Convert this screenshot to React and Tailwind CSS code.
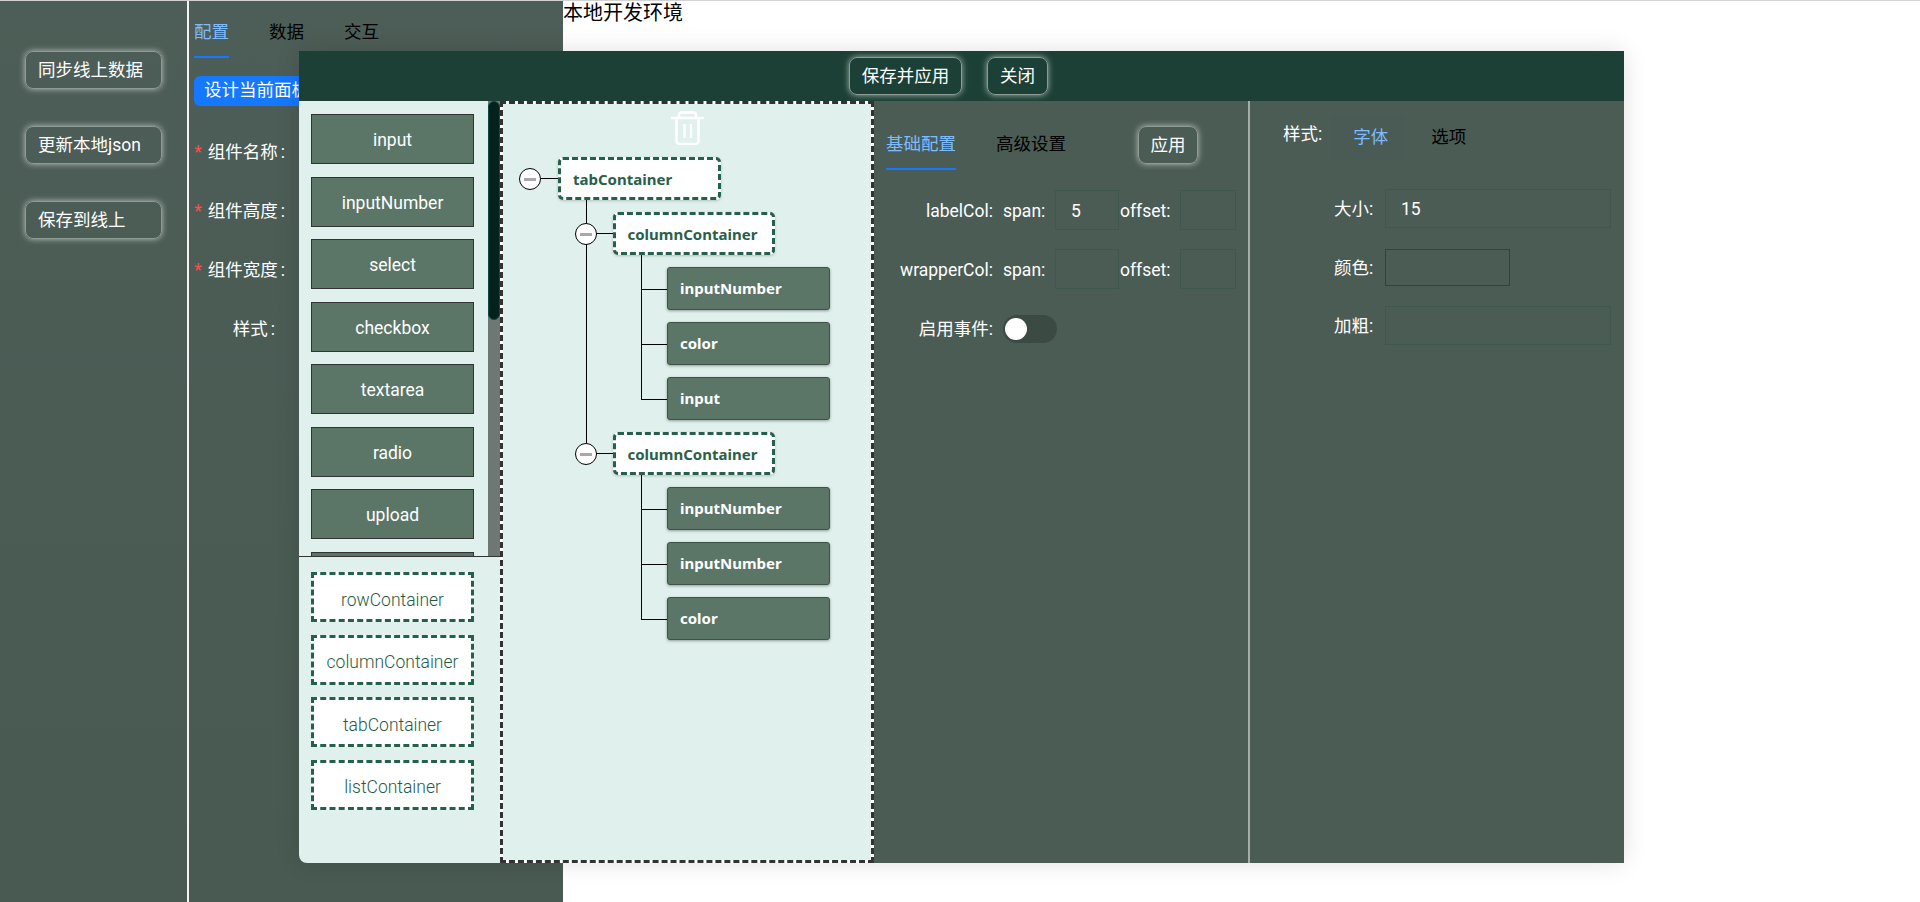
import React from 'react';

const fontStack = { fontFamily: 'Roboto, "Noto Sans CJK SC", sans-serif' };
const treeFont = { fontFamily: '"Noto Sans", "Noto Sans CJK SC", sans-serif' };

const GlowButton = ({ children, className = '' }) => (
  <button className={`h-[38px] rounded-lg border border-[#8d9c95] text-[17.5px] leading-[36px] text-white shadow-[0_0_6px_rgba(255,255,255,0.6)] ${className}`}>
    {children}
  </button>
);

const Tabs = ({ items, className = '' }) => (
  <div className={`flex gap-10 ${className}`}>
    {items.map((t, i) => (
      <div key={t} className={`h-[37px] border-b-[2.5px] text-[17.5px] leading-[22px] ${i === 0 ? 'border-[#1677ff] text-[#7cbcff]' : 'border-transparent text-black'}`}>{t}</div>
    ))}
  </div>
);

const FormLabel = ({ text, required, className = '' }) => (
  <div className={`flex items-center justify-end text-[17.5px] text-white ${className}`}>
    {required && <span className="mr-[6px] text-[#ff4d4f]">*</span>}
    {text}<span className="ml-[3px]">:</span>
  </div>
);

const Field = ({ value, className = '' }) => (
  <div className={`shrink-0 border border-[#3f574c] pl-[15px] text-[17.5px] text-white ${className}`}>{value}</div>
);

const Collapse = ({ className = '' }) => (
  <span className={`absolute flex h-[22px] w-[22px] items-center justify-center rounded-full border-[1.5px] border-black bg-white ${className}`}>
    <span className="h-[3px] w-[12px] bg-[#a8a8a8]"></span>
  </span>
);

const ContainerNode = ({ label, left, top, children }) => (
  <div className={`relative w-[162.5px] ${top}`}>
    <div className="relative flex h-[43px] items-center rounded-[5px] border-[3px] border-dashed border-[#24614a] bg-white pl-[12px] pt-[1px] text-[15px] font-bold text-[#2a6049] shadow-[0_1px_3px_rgba(0,0,0,0.2)]">
      {label}
    </div>
    <Collapse className={left} />
    <span className="absolute left-[-17px] top-[21px] h-px w-[17px] bg-black"></span>
    {children}
  </div>
);

const Leaf = ({ label }) => (
  <div className="relative mt-3 flex h-[43px] w-[163px] items-center rounded-[3px] border border-[#3e5248] bg-[#5b7667] pl-[12px] text-[15px] font-bold text-white shadow-[0_1px_3px_rgba(0,0,0,0.35)]">
    <span className="absolute left-[-27px] top-[21px] h-px w-[26px] bg-black"></span>
    {label}
  </div>
);

const LeafGroup = ({ items }) => (
  <div className="relative ml-[54.5px] flex flex-col">
    <span className="absolute left-[-26px] top-0 h-[144px] w-px bg-black"></span>
    {items.map((t, i) => <Leaf key={i} label={t} />)}
  </div>
);

const App = () => {
  // the last one is cut off by the scroll area, its label never shows
  const widgets = ['input', 'inputNumber', 'select', 'checkbox', 'textarea', 'radio', 'upload', ''];
  const containers = ['rowContainer', 'columnContainer', 'tabContainer', 'listContainer'];

  return (
    <div className="relative h-[902px] w-full overflow-hidden border-t border-[#d2d2d2] bg-white" style={fontStack}>
      <div className="flex h-full">
        <aside className="flex w-[187px] shrink-0 flex-col gap-[37px] bg-gradient-to-b from-[#4d5d57] to-[#485a52] pl-[25px] pt-[50px]">
          {['同步线上数据', '更新本地json', '保存到线上'].map((t) => (
            <GlowButton key={t} className="w-[137px] pl-[12px] text-left">{t}</GlowButton>
          ))}
        </aside>
        <div className="w-[2px] shrink-0 bg-[#f2f4f3]"></div>
        <section className="w-[374px] shrink-0 bg-gradient-to-b from-[#4d5d57] to-[#485a52] pl-[5px] pt-[20px]">
          <Tabs items={['配置', '数据', '交互']} />
          <div className="mt-[18px] h-[30px] w-[120px] overflow-hidden whitespace-nowrap rounded-md bg-[#1677ff] pl-[10px] text-[17.5px] leading-[29px] text-white">设计当前面板</div>
          <div className="mt-[34px] flex w-[91px] flex-col gap-[35px]">
            <FormLabel text="组件名称" required className="h-6" />
            <FormLabel text="组件高度" required className="h-6" />
            <FormLabel text="组件宽度" required className="h-6" />
            <FormLabel text="样式" className="mr-[10px] h-6" />
          </div>
        </section>
        <div className="h-6 text-[20px] leading-[24px] text-black">本地开发环境</div>
      </div>

      <div className="absolute left-[299px] top-[50px] flex h-[812px] w-[1325px] flex-col overflow-hidden rounded-bl-lg shadow-[0_0_24px_rgba(0,0,0,0.12)]">
        <header className="flex h-[50px] shrink-0 items-center justify-center gap-[25px] bg-[#1c4035] pr-[26px]">
          <GlowButton className="w-[113px]">保存并应用</GlowButton>
          <GlowButton className="w-[61px]">关闭</GlowButton>
        </header>

        <div className="flex min-h-0 flex-1">
          <div className="flex w-[201px] shrink-0 flex-col bg-[#e0f0ec]">
            <div className="relative h-[456px] shrink-0 overflow-hidden border-b border-[#333]">
              <div className="absolute right-0 top-0 h-full w-[12px] bg-[#6f7775]">
                <div className="h-[219px] rounded-md border border-[#0e4a42] bg-[#05211c]"></div>
              </div>
              <div className="flex flex-col gap-[12.5px] pl-[12px] pt-[13px]">
                {widgets.map((t, i) => (
                  <div key={i} className="flex h-[50px] w-[163px] shrink-0 items-center justify-center border border-[#333] bg-[#5b7667] pt-[3px] text-[17.5px] text-white">{t}</div>
                ))}
              </div>
            </div>
            <div className="flex flex-col gap-[12.5px] pl-[12px] pt-[15px]">
              {containers.map((t) => (
                <div key={t} className="flex h-[50px] w-[163px] items-center justify-center border-[3px] border-dashed border-[#24614a] bg-white pt-[6px] text-[17.5px] font-light text-[#1f5c45]">{t}</div>
              ))}
            </div>
          </div>

          <div className="w-[374px] shrink-0 border-[3px] border-dashed border-[#333] bg-white">
            <div className="h-full bg-[#e0f0ec]" style={treeFont}>
              <div className="flex justify-center pt-[7px]">
                <svg width="33" height="34" viewBox="0 0 33 34" fill="none" stroke="#ffffff" strokeWidth="2.5" strokeLinejoin="round">
                  <path d="M0 7H33" />
                  <path d="M8 7V4a2.500 2.500 0 0 1 2.500-2.500h12A2.500 2.500 0 0 1 25 4V7" />
                  <path d="M5.500 7V30a3 3 0 0 0 3 3h16a3 3 0 0 0 3-3V7" />
                  <path d="M13.500 13V27M20 13V27" />
                </svg>
              </div>
              <div className="ml-[55px] mt-[12px]">
                <ContainerNode label="tabContainer" left="left-[-39px] top-[11px]">
                  <div className="relative ml-[54.5px] flex flex-col">
                    <span className="absolute left-[-27px] top-0 h-[243px] w-px bg-black"></span>
                    <ContainerNode label="columnContainer" left="left-[-38px] top-[11px]" top="mt-3">
                      <LeafGroup items={['inputNumber', 'color', 'input']} />
                    </ContainerNode>
                    <ContainerNode label="columnContainer" left="left-[-38px] top-[11px]" top="mt-3">
                      <LeafGroup items={['inputNumber', 'inputNumber', 'color']} />
                    </ContainerNode>
                  </div>
                </ContainerNode>
              </div>
            </div>
          </div>

          <div className="w-[376px] shrink-0 border-r-2 border-[#a3aea9] bg-[#4b5c55] pl-[12px] pt-[32px]">
            <div className="flex items-start">
              <Tabs items={['基础配置', '高级设置']} />
              <GlowButton className="ml-[72px] mt-[-7px] w-[60px]">应用</GlowButton>
            </div>
            <div className="mt-[20px] flex items-center text-[17.5px] text-white">
              <span className="w-[107px] pt-[2px] text-right">labelCol:</span>
              <span className="ml-[10px] w-[52px] pt-[2px]">span:</span>
              <Field value="5" className="h-10 w-[64px] leading-[40px]" />
              <span className="ml-[1px] w-[60px] pt-[2px]">offset:</span>
              <Field className="h-10 w-[56px]" />
            </div>
            <div className="mt-[19px] flex items-center text-[17.5px] text-white">
              <span className="w-[107px] pt-[2px] text-right">wrapperCol:</span>
              <span className="ml-[10px] w-[52px] pt-[2px]">span:</span>
              <Field className="h-10 w-[64px]" />
              <span className="ml-[1px] w-[60px] pt-[2px]">offset:</span>
              <Field className="h-10 w-[56px]" />
            </div>
            <div className="mt-[26px] flex items-center text-[17.5px] text-white">
              <span className="w-[107px] text-right">启用事件:</span>
              <span className="ml-[10px] flex h-7 w-[54px] items-center rounded-full bg-[#3c4a44] pl-[2px]">
                <span className="h-[22px] w-[22px] rounded-full bg-white"></span>
              </span>
            </div>
          </div>

          <div className="min-w-0 flex-1 bg-[#4b5c55] pt-[13px]">
            <div className="flex items-start pl-[33px]">
              <span className="mt-[7px] text-[17.5px] text-white">样式:</span>
              <div className="ml-[8px] flex">
                <div className="flex h-[46px] w-[75px] items-center justify-center rounded-md bg-[#4a5a54] pl-[6px] text-[17.5px] text-[#7cbcff]">字体</div>
                <div className="ml-[26px] flex h-[46px] items-center text-[17.5px] text-black">选项</div>
              </div>
            </div>
            <div className="mt-[29px] flex flex-col pl-[84px]">
              <div className="flex items-center">
                <span className="w-[51px] pt-[2px] text-[17.5px] text-white">大小:</span>
                <Field value="15" className="h-[39px] w-[226px] leading-[39px]" />
              </div>
              <div className="mt-[21px] flex items-center">
                <span className="w-[51px] pt-[2px] text-[17.5px] text-white">颜色:</span>
                <div className="h-[37px] w-[125px] border border-[#3a3f3c]"></div>
              </div>
              <div className="mt-5 flex items-center">
                <span className="w-[51px] pt-[2px] text-[17.5px] text-white">加粗:</span>
                <Field className="h-[39px] w-[226px]" />
              </div>
            </div>
          </div>
        </div>
      </div>
    </div>
  );
};

export default App;
